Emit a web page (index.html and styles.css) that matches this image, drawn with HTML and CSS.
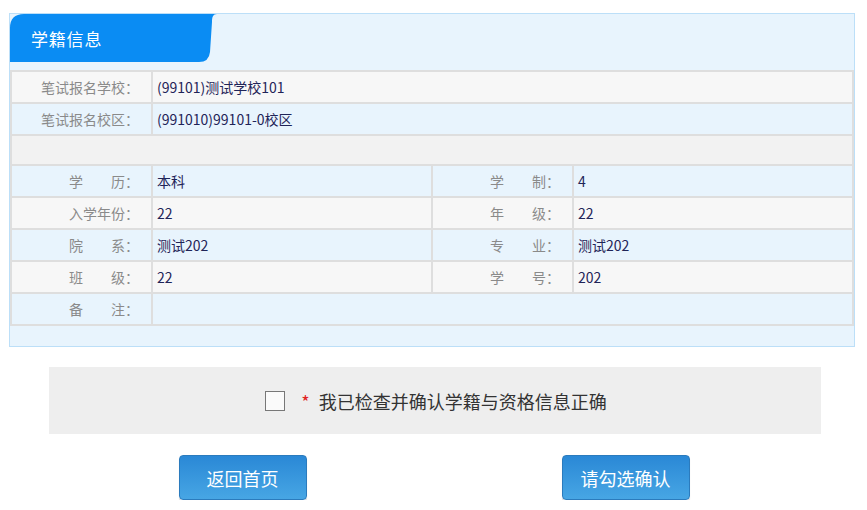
FILE: index.html
```html
<!DOCTYPE html>
<html lang="zh-CN">
<head>
    <meta charset="UTF-8">
    <title>学籍信息</title>
    <link rel="stylesheet" href="styles.css">
</head>
<body>
    <div class="page">
        <div class="panel">
            <div class="tab-bar">
                <div class="tab">
                    <svg class="tab-bg" width="207" height="48" viewBox="0 0 207 48">
                        <path d="M0 48 V14 Q0 0 14 0 H207 C203 0 202 3 202 8 L200 38 Q199 48 189 48 Z" fill="#0a8cf3"/>
                    </svg>
                    <span class="tab-title">学籍信息</span>
                </div>
            </div>

            <table class="info-table">
                <colgroup>
                    <col class="col-label">
                    <col class="col-value">
                    <col class="col-label">
                    <col class="col-value">
                </colgroup>
                <tr class="row-gray">
                    <td class="label">笔试报名学校：</td>
                    <td class="value" colspan="3">(99101)测试学校101</td>
                </tr>
                <tr class="row-blue">
                    <td class="label">笔试报名校区：</td>
                    <td class="value" colspan="3">(991010)99101-0校区</td>
                </tr>
                <tr class="row-empty">
                    <td colspan="4"></td>
                </tr>
                <tr class="row-blue">
                    <td class="label">学　　历：</td>
                    <td class="value">本科</td>
                    <td class="label">学　　制：</td>
                    <td class="value">4</td>
                </tr>
                <tr class="row-gray">
                    <td class="label">入学年份：</td>
                    <td class="value">22</td>
                    <td class="label">年　　级：</td>
                    <td class="value">22</td>
                </tr>
                <tr class="row-blue">
                    <td class="label">院　　系：</td>
                    <td class="value">测试202</td>
                    <td class="label">专　　业：</td>
                    <td class="value">测试202</td>
                </tr>
                <tr class="row-gray">
                    <td class="label">班　　级：</td>
                    <td class="value">22</td>
                    <td class="label">学　　号：</td>
                    <td class="value">202</td>
                </tr>
                <tr class="row-blue">
                    <td class="label">备　　注：</td>
                    <td class="value" colspan="3"></td>
                </tr>
            </table>
        </div>

        <div class="confirm-box">
            <label class="confirm-label">
                <span class="check"></span>
                <span class="star">*</span>
                我已检查并确认学籍与资格信息正确
            </label>
        </div>

        <div class="actions">
            <button type="button" class="btn">返回首页</button>
            <button type="button" class="btn">请勾选确认</button>
        </div>
    </div>
</body>
</html>
```

FILE: styles.css
```css
* {
    box-sizing: border-box;
    margin: 0;
    padding: 0;
}

body {
    background-color: #fff;
    font-family: "Noto Sans CJK SC", "Liberation Sans", sans-serif;
    color: #333;
}

.page {
    padding: 13px 12px 0 9px;
}

.panel {
    border: 1px solid #bcdff8;
    background-color: #e8f4fd;
    padding-bottom: 20px;
}

.tab-bar {
    height: 56px;
}

.tab {
    position: relative;
    width: 207px;
    height: 48px;
    display: flex;
    align-items: center;
}

.tab-bg {
    position: absolute;
    left: 0;
    top: 0;
}

.tab-title {
    position: relative;
    padding-left: 21px;
    color: #fff;
    font-size: 17px;
    letter-spacing: 0.8px;
}

.info-table {
    width: 100%;
    border-collapse: collapse;
    table-layout: fixed;
    font-size: 14px;
}

.col-label {
    width: 141px;
}

.info-table td {
    border: 2px solid #dedede;
    height: 32px;
    padding: 0 4px;
    white-space: nowrap;
}

.row-gray td {
    background-color: #f7f7f7;
}

.row-blue td {
    background-color: #e8f4fd;
}

.row-empty td {
    background-color: #f2f2f2;
    height: 30px;
}

.label {
    text-align: right;
    color: #8a8a8a;
    padding-right: 12px !important;
}

.value {
    color: #1f2458;
}

.confirm-box {
    margin: 20px 0 0 40px;
    width: 772px;
    height: 67px;
    background-color: #eeeeee;
    display: flex;
    align-items: center;
    justify-content: center;
}

.confirm-label {
    display: flex;
    align-items: center;
    font-size: 18px;
    color: #333;
    padding-left: 2px;
}

.check {
    width: 20px;
    height: 20px;
    border: 1px solid #777;
    background-color: #fafafa;
    margin-right: 16px;
}

.star {
    color: #e02020;
    margin-right: 9px;
}

.actions {
    display: flex;
    justify-content: center;
    gap: 255px;
    width: 772px;
    margin: 21px 0 0 39px;
}

.btn {
    width: 128px;
    height: 45px;
    border: 1px solid #2b7bbd;
    border-radius: 4px;
    background: linear-gradient(#2a88d6, #47a6e4);
    box-shadow: 0 2px 1px rgba(0, 0, 0, 0.15);
    color: #fff;
    font-family: "Noto Sans CJK SC", sans-serif;
    font-size: 18px;
    cursor: pointer;
}
```
